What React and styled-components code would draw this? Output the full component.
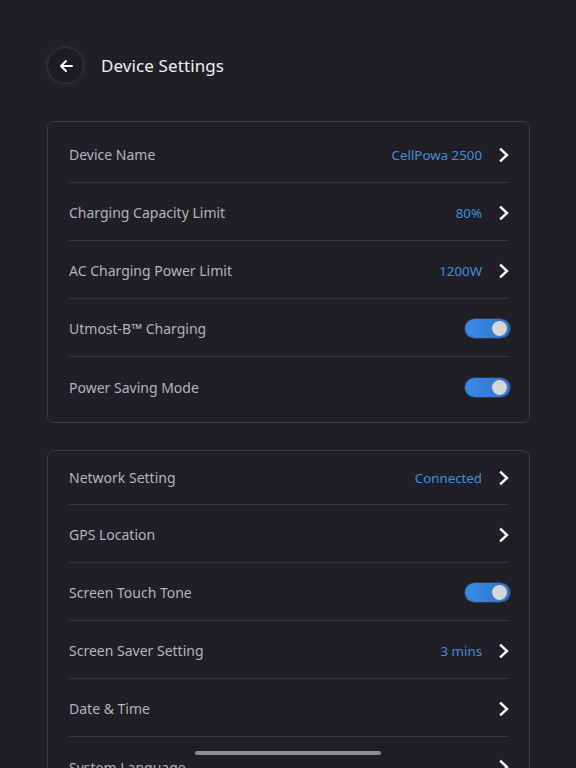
import React from "react";
import styled, { createGlobalStyle } from "styled-components";

const Global = createGlobalStyle`
  html, body { margin: 0; padding: 0; background: #1f1f25; height: 768px; overflow: hidden; }
  body { font-family: "Noto Sans", "Open Sans", sans-serif; -webkit-font-smoothing: antialiased; }
  * { box-sizing: border-box; }
`;

const Page = styled.div`
  width: 576px;
  height: 768px;
  overflow: hidden;
  background: #1f1f25;
  padding: 48px 46px 0 47px;
  display: flex;
  flex-direction: column;
  gap: 27px;
`;

const Header = styled.div`
  display: flex;
  align-items: center;
  gap: 17px;
  height: 35px;
  margin-bottom: 11px;
`;

const BackButton = styled.button`
  width: 37px;
  height: 37px;
  border-radius: 50%;
  border: 1px solid #36363d;
  background: #1c1c22;
  box-shadow: 0 0 8px rgba(255, 255, 255, 0.06);
  display: flex;
  align-items: center;
  justify-content: center;
  padding: 0;
  color: #fff;
`;

const Title = styled.h1`
  margin: 0;
  font-size: 17px;
  font-weight: 400;
  color: #f0f0f2;
  letter-spacing: 0.1px;
`;

const Card = styled.div`
  border: 1.5px solid #3b3c42;
  border-radius: 7px;
  padding: ${(p) => p.$pad || "3px 20px 7px 21px"};
`;

const Row = styled.div`
  height: ${(p) => p.$h || 58}px;
  display: flex;
  align-items: center;
  border-bottom: ${(p) => (p.$last ? "none" : "1.5px solid #36373c")};
  padding-top: ${(p) => (p.$h ? 0 : 2)}px;
`;

const Label = styled.div`
  flex: 1;
  font-size: 14px;
  color: #b4b4b9;
`;

const Value = styled.div`
  font-size: 13.3px;
  color: #3f8fdf;
  margin-right: 16px;
`;

const Chevron = styled.svg`
  width: 12px;
  height: 16px;
  margin-right: -1px;
`;

const Toggle = styled.div`
  width: 45px;
  height: 19px;
  margin-right: -1px;
  border-radius: 10px;
  background: linear-gradient(90deg, #3a8ae6, #2f76c8);
  box-shadow: 0 0 0 1px #2a3a52;
  position: relative;
`;

const Knob = styled.div`
  position: absolute;
  right: 3px;
  top: 2px;
  width: 15px;
  height: 15px;
  border-radius: 50%;
  background: #d6d6d8;
`;

const HomeBar = styled.div`
  position: fixed;
  left: 195px;
  bottom: 13px;
  width: 186px;
  height: 4px;
  border-radius: 2px;
  background: #8e8e92;
`;

const Arrow = () => (
  <Chevron viewBox="0 0 12 16">
    <path d="M3 2.5 L9 8 L3 13.5" stroke="#fff" strokeWidth="2.4" fill="none" strokeLinecap="square" />
  </Chevron>
);

const SettingRow = ({ label, value, toggle, arrow, last, h }) => (
  <Row $last={last} $h={h}>
    <Label>{label}</Label>
    {value && <Value>{value}</Value>}
    {toggle ? (
      <Toggle>
        <Knob />
      </Toggle>
    ) : (
      arrow && <Arrow />
    )}
  </Row>
);

export default function App() {
  return (
    <>
      <Global />
      <Page>
        <Header>
          <BackButton aria-label="Back">
            <svg width="16" height="16" viewBox="0 0 16 16">
              <path d="M14 8 H3 M8 3 L3 8 L8 13" stroke="#fff" strokeWidth="1.9" fill="none" strokeLinecap="round" strokeLinejoin="round" />
            </svg>
          </BackButton>
          <Title>Device Settings</Title>
        </Header>
        <Card>
          <SettingRow label="Device Name" value="CellPowa 2500" arrow />
          <SettingRow label="Charging Capacity Limit" value="80%" arrow />
          <SettingRow label="AC Charging Power Limit" value="1200W" arrow />
          <SettingRow label="Utmost-B™ Charging" toggle />
          <SettingRow label="Power Saving Mode" toggle last />
        </Card>
        <Card $pad="0 20px 0 21px">
          <SettingRow label="Network Setting" value="Connected" arrow h={54} />
          <SettingRow label="GPS Location" arrow />
          <SettingRow label="Screen Touch Tone" toggle />
          <SettingRow label="Screen Saver Setting" value="3 mins" arrow />
          <SettingRow label="Date & Time" arrow />
          <SettingRow label="System Language" arrow last />
        </Card>
      </Page>
      <HomeBar />
    </>
  );
}
